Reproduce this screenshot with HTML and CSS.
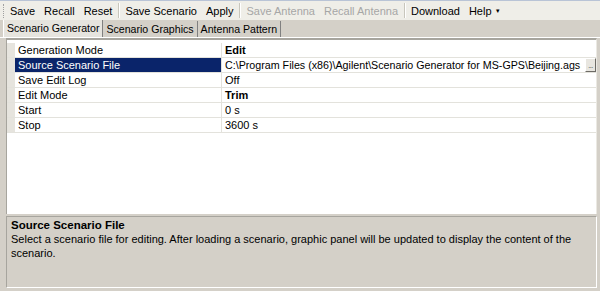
FILE: index.html
```html
<!DOCTYPE html>
<html lang="en">
<head>
<meta charset="UTF-8">
<title>Scenario Generator</title>
<link rel="stylesheet" href="styles.css">
</head>
<body>
<div class="menubar">
    <span class="grip"></span>
    <span class="item">Save</span>
    <span class="item">Recall</span>
    <span class="item">Reset</span>
    <span class="sep"></span>
    <span class="item">Save Scenario</span>
    <span class="item">Apply</span>
    <span class="sep"></span>
    <span class="item disabled">Save Antenna</span>
    <span class="item disabled">Recall Antenna</span>
    <span class="sep"></span>
    <span class="item">Download</span>
    <span class="item">Help <span class="arrow">&#9662;</span></span>
</div>
<div class="tabs">
    <span class="tab active">Scenario Generator</span>
    <span class="tab">Scenario Graphics</span>
    <span class="tab">Antenna Pattern</span>
</div>
<div class="panel">
    <div class="grid">
        <div class="row">
            <div class="hdr"></div>
            <div class="label">Generation Mode</div>
            <div class="value bold">Edit</div>
        </div>
        <div class="row selected">
            <div class="hdr"></div>
            <div class="label">Source Scenario File</div>
            <div class="value"><span class="path">C:\Program Files (x86)\Agilent\Scenario Generator for MS-GPS\Beijing.ags</span><span class="browse">...</span></div>
        </div>
        <div class="row">
            <div class="hdr"></div>
            <div class="label">Save Edit Log</div>
            <div class="value">Off</div>
        </div>
        <div class="row">
            <div class="hdr"></div>
            <div class="label">Edit Mode</div>
            <div class="value bold">Trim</div>
        </div>
        <div class="row">
            <div class="hdr"></div>
            <div class="label">Start</div>
            <div class="value">0 s</div>
        </div>
        <div class="row">
            <div class="hdr"></div>
            <div class="label">Stop</div>
            <div class="value">3600 s</div>
        </div>
    </div>
    <div class="desc">
        <div class="desc-title">Source Scenario File</div>
        <div class="desc-text">Select a scenario file for editing. After loading a scenario, graphic panel will be updated to display the content of the scenario.</div>
    </div>
</div>
</body>
</html>
```

FILE: styles.css
```css
* {
    box-sizing: border-box;
}
body {
    margin: 0;
    width: 600px;
    height: 291px;
    overflow: hidden;
    background-color: #d4d0c8;
    font-family: "Liberation Sans", Arial, sans-serif;
    font-size: 11px;
    color: #000;
}
.menubar {
    display: flex;
    align-items: center;
    height: 20px;
    border-top: 1px solid #b9c4d6;
    background-color: #efeee8;
    padding-left: 3px;
}
.grip {
    width: 1px;
    height: 14px;
    border-left: 1px dotted #a0a0a0;
    margin-right: 2px;
}
.item {
    padding: 0 4px;
    margin-right: 1px;
    white-space: nowrap;
}
.item.disabled {
    color: #a6a6a6;
}
.arrow {
    font-size: 7px;
    margin-left: 1px;
    vertical-align: 2px;
}
.sep {
    width: 2px;
    height: 15px;
    border-left: 1px solid #c8c6bc;
    border-right: 1px solid #fff;
    margin: 0 1px;
}
.tabs {
    display: flex;
    align-items: flex-end;
    height: 18px;
    padding-left: 3px;
    border-bottom: 1px solid #fff;
}
.tab {
    height: 16px;
    line-height: 16px;
    padding: 0 3px;
    font-size: 10.6px;
    border-right: 1px solid #808080;
    white-space: nowrap;
}
.tab.active {
    background-color: #e6e4de;
    border-left: 1px solid #fff;
    height: 17px;
    line-height: 17px;
}
.panel {
    margin: 0 3px 0 6px;
    height: 250px;
    display: flex;
    flex-direction: column;
}
.grid {
    flex: 1;
    background-color: #fff;
    border-top: 2px solid #a7a59e;
    border-left: 1px solid #a7a59e;
    border-right: 1px solid #ebe9e3;
    padding-top: 3px;
}
.row {
    display: grid;
    grid-template-columns: 8px 207px 1fr;
    height: 15px;
    border-bottom: 1px solid #e3e2dc;
    line-height: 14px;
}
.hdr {
    background-color: #e6e4de;
}
.label {
    padding-left: 3px;
    border-right: 1px solid #e3e2dc;
    white-space: nowrap;
}
.value {
    display: flex;
    padding-left: 3px;
    white-space: nowrap;
}
.path {
    flex: 1;
    overflow: hidden;
    font-size: 10.7px;
}
.bold {
    font-weight: bold;
}
.selected .label {
    background-color: #0a246a;
    color: #fff;
}
.browse {
    width: 11px;
    height: 14px;
    line-height: 14px;
    text-align: center;
    font-size: 7px;
    letter-spacing: -0.5px;
    color: #333;
    background-color: #e8e6e0;
    border-right: 1px solid #6d6b66;
    border-bottom: 1px solid #6d6b66;
    border-top: 1px solid #fff;
    border-left: 1px solid #fff;
}
.desc {
    height: 72px;
    margin-top: 2px;
    border: 1px solid #a7a59e;
    border-right-color: #fff;
    border-bottom-color: #fff;
    padding: 1px 4px;
    line-height: 14px;
}
.desc-title {
    font-weight: bold;
    font-size: 11.5px;
}
```
